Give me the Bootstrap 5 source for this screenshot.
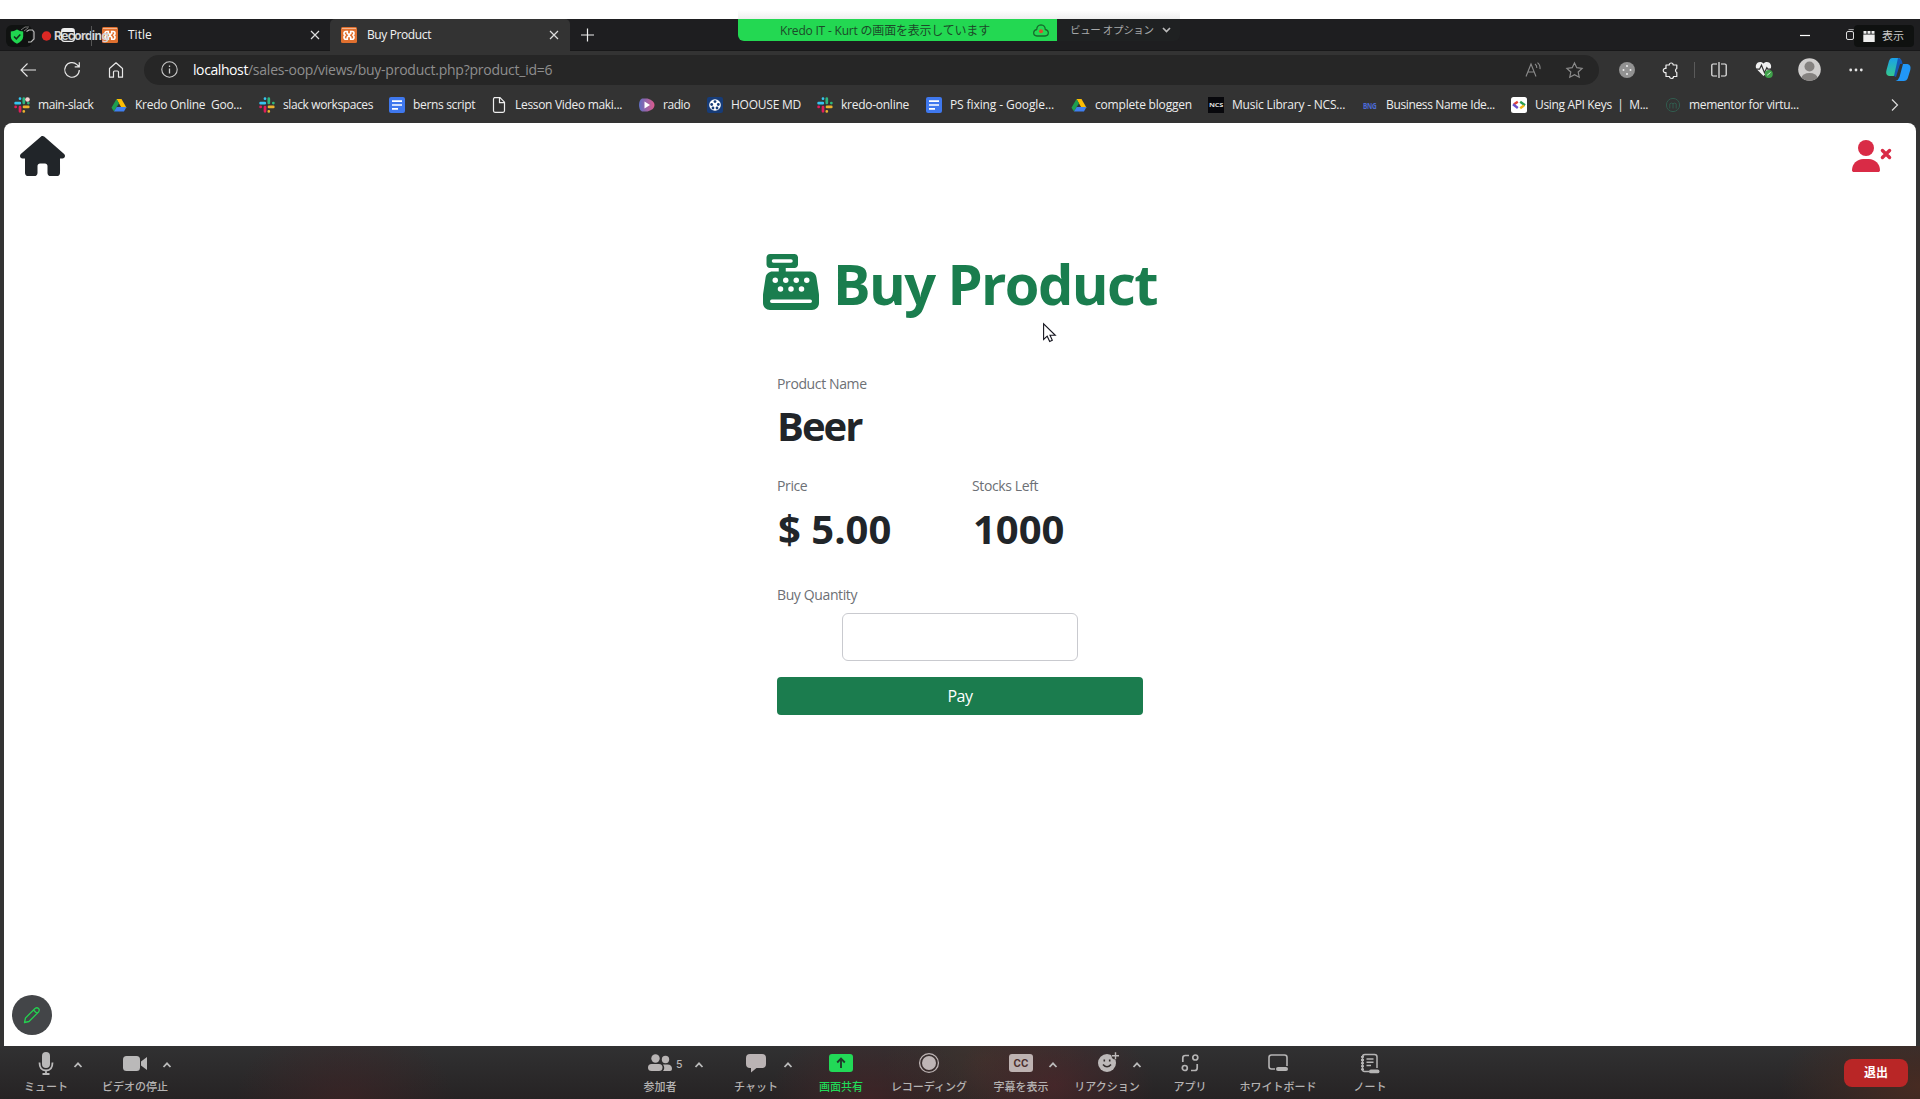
<!DOCTYPE html>
<html lang="ja">
<head>
<meta charset="utf-8">
<title>Buy Product</title>
<link rel="stylesheet" href="https://cdn.jsdelivr.net/npm/bootstrap@5.3.0/dist/css/bootstrap.min.css">
<style>
body{font-family:"Open Sans","Noto Sans CJK JP",sans-serif;background:#fff;height:1099px;overflow:hidden;position:relative}
svg{display:block;flex:none;overflow:visible}
.window{height:1080px;margin-top:19px;background:#333}
.tabstrip{height:32px;background:#1e1e20;font-size:12px;color:#f2f2f2;border-bottom:1px solid #181819;line-height:32px}
.tab-a{width:330px;padding-left:102px;padding-right:10px}
.tab-b{width:240px;height:32px;background:#333;padding:0 11px;border-radius:5px 5px 0 0;letter-spacing:-.39px}
.tab-a .cap,.tab-b .cap{margin-left:10px}
.winctl{padding-right:66px;gap:36px}
.toolbar{height:34px;padding:3px 9px 0 20px}
.address{width:1455px;height:30px;border-radius:15px;background:#262626;margin-left:20px;padding:0 16px 0 17px;font-size:14px;color:#8e8e8e;white-space:pre}
.host{color:#fff;letter-spacing:-.41px;margin-left:15px}
.path{letter-spacing:-.24px}
.ms-28{margin-left:28px}
.bookmarks{height:38px;padding-left:14px;padding-top:2px;color:#ededed;font-size:12px;margin-bottom:0}
.bookmarks>li{display:flex;align-items:center;gap:8px;white-space:pre;letter-spacing:-.34px;flex:none}
.bookmarks svg{width:16px;height:16px}
.bookmarks>li:nth-child(1){width:97px;letter-spacing:-.4px}
.bookmarks>li:nth-child(2){width:148px;letter-spacing:-.27px}
.bookmarks>li:nth-child(3){width:130px;letter-spacing:-.39px}
.bookmarks>li:nth-child(4){width:102px}
.bookmarks>li:nth-child(5){width:148px;letter-spacing:-.31px}
.bookmarks>li:nth-child(6){width:68px;letter-spacing:-.43px}
.bookmarks>li:nth-child(7){width:110px;letter-spacing:-.24px}
.bookmarks>li:nth-child(8){width:109px;letter-spacing:-.26px}
.bookmarks>li:nth-child(9){width:145px;letter-spacing:-.1px}
.bookmarks>li:nth-child(10){width:137px;letter-spacing:-.19px}
.bookmarks>li:nth-child(11){width:154px;letter-spacing:-.2px}
.bookmarks>li:nth-child(12){width:149px;letter-spacing:-.36px}
.bookmarks>li:nth-child(13){width:154px}
.bookmarks>li:nth-child(14){width:226px;letter-spacing:-.34px}
.viewport{height:923px;margin:0 4px;background:#fff;border-radius:8px 8px 0 0;color:#212529}
.topnav{padding:13px 24px 0 16px;height:127px}
.sheet{width:398px;margin:0 auto}
.heading{font-size:56px;font-weight:700;line-height:67px;color:#1a7d4e;letter-spacing:-1.6px;gap:14px;height:67px;white-space:nowrap;margin-left:2px}
.fields{padding:0 16px}
.caption{display:block;font-size:14px;line-height:21px;color:#6d7075;letter-spacing:-.38px}
.figure-big{font-size:40px;font-weight:700;line-height:48px;margin:9px 0 0;padding-left:1px;white-space:nowrap}
.item-name{letter-spacing:-2px;margin-top:8px;padding-left:0}
.pname{padding-top:56px;margin-bottom:25px}
.qty-label{margin-top:31px}
.qty{width:236px;height:48px;border:1px solid #c9cacf;border-radius:6px;margin:8px auto 0}
.pay{height:38px;line-height:36px;padding:0;border-radius:4px;background:#1b7c4e;border:0;color:#fff;font-size:16px;letter-spacing:-.5px;margin-top:16px}
.meeting{height:53px;color:#b5b3b3;font-size:11px;font-weight:500;padding:0 12px 0 6px;
background:radial-gradient(ellipse 110px 80px at 345px 55px,#45232588 0,transparent 100%),radial-gradient(ellipse 100px 80px at 868px 55px,#4d242799 0,transparent 100%),radial-gradient(ellipse 100px 70px at 1054px 40px,#50262aaa 0,transparent 100%),radial-gradient(ellipse 100px 80px at 985px 15px,#45332caa 0,transparent 100%),radial-gradient(ellipse 140px 80px at 1920px 40px,#472b22 0,transparent 100%),linear-gradient(#313132,#262324)}
.tool{width:80px;height:53px;position:relative;flex:none;padding-top:6px;text-align:center;white-space:nowrap}
.tool>svg:first-child{width:24px;height:24px;margin:0 auto 2px}
.tool div{line-height:18px}
.caret{position:absolute;top:15px;left:67px}
.far{left:74px}
.tool:nth-child(2){margin-left:9px}
.tool:nth-child(3){margin-left:445px}
.tool:nth-child(4){margin-left:16px}
.tool:nth-child(5){margin-left:5px;color:#22d957}
.tool:nth-child(6){margin-left:8px}
.tool:nth-child(7){margin-left:12px}
.tool:nth-child(8){margin-left:6px}
.tool:nth-child(8) .caret{left:65px}
.tool:nth-child(9){margin-left:3px}
.tool:nth-child(10){margin-left:8px}
.tool:nth-child(11){margin-left:12px}
.leave{width:64px;height:28px;border-radius:8px;background:#b92626;color:#fff;font-weight:700;font-size:12px;line-height:28px;text-align:center;margin-left:auto}
.banner{position:absolute;left:738px;top:19px;width:442px;height:22px;border-radius:0 0 6px 6px;overflow:hidden;font-size:12px;background:#1f2122;line-height:21px}
.shade{position:absolute;left:738px;top:10px;width:442px;height:9px;background:linear-gradient(#fff,#eee)}
.sharing{width:319px;background:#23d852;color:#1c4a29;padding:0 8px 0 42px;letter-spacing:-.2px}
.viewopt{color:#a7a9aa;padding-left:13px;font-size:10.5px;letter-spacing:-.35px;gap:8px}
.rec{position:absolute;left:6px;top:25px;height:22px;font-family:Inter,sans-serif;font-weight:700;font-size:12px;letter-spacing:-.6px;color:#d3d3d3}
.shield{width:26px;height:22px;border-radius:6px;background:#101211;padding-left:4px}
.rec-dot{margin:0 2px 0 8px}
.display-btn{position:absolute;left:1854px;top:25px;width:60px;height:22px;border-radius:4px;background:#0f1110;color:#c9c9c9;font-size:11px;gap:7px;padding-left:9px}
.wsicons{position:absolute;left:20px;top:26px}
.pen{position:absolute;left:12px;top:995px;width:40px;height:40px;border-radius:50%;background:#434548}
.pointer-arrow{position:absolute;left:1043px;top:323px}
</style>
</head>
<body>
<svg width="0" height="0" class="position-absolute">
<symbol id="xampp" viewBox="0 0 16 16"><rect width="16" height="16" rx="1.500" fill="#e0702f"/><path d="M1 1.500h14" stroke="#f5b58d"/><path d="M6.300 4.500H4.800Q3 4.500 3 6.300T4.800 8.200Q3 8.200 3 10.200T4.800 12.200H6.300V10.300L8 8.700l1.700 1.600v1.900h1.500q1.800 0 1.800-2t-1.800-2q1.800 0 1.800-1.900t-1.800-1.800H9.700v1.800L8 7.700 6.300 6.300z" fill="none" stroke="#fff" stroke-width="1.600"/></symbol>
<symbol id="slack" viewBox="0 0 16 16"><g stroke-width="2.700" stroke-linecap="round"><path d="M1.600 6.200h4.200M6 1.600v.1" stroke="#36c5f0"/><path d="M9.800 1.700v4.200M14.300 6.100h.1" stroke="#2eb67d"/><path d="M10 9.900h4.300M9.800 14.300v.1" stroke="#ecb22e"/><path d="M6 10v4.300M1.600 9.900h.1" stroke="#e01e5a"/></g></symbol>
<symbol id="drive" viewBox="0 0 16 16"><path d="M5.500 2h5l5 8.700h-5z" fill="#fbbc04"/><path d="M5.500 2 8 6.300 3 14.500.5 10.700z" fill="#1e9e50"/><path d="M3 14.500l2.700-4.500h9.800L13 14.500z" fill="#3f7ff0"/></symbol>
<symbol id="docs" viewBox="0 0 16 16"><rect width="16" height="16" rx="2" fill="#3f78ee"/><path d="M3 4.200h10M3 8h10M3 11.800h6" stroke="#fff" stroke-width="1.700"/></symbol>
<symbol id="x" viewBox="0 0 10 10"><path d="M1 1l8 8M9 1l-8 8" stroke="#ddd" stroke-width="1.200"/></symbol>
<symbol id="up" viewBox="0 0 10 8"><path d="M1.500 6 5 2.300 8.500 6" fill="none" stroke="#bbb" stroke-width="1.800"/></symbol>
</svg>

<div class="window">
 <header class="tabstrip d-flex">
  <div class="tab-a d-flex align-items-center"><svg width="16" height="16"><use href="#xampp"/></svg><span class="cap">Title</span><svg class="ms-auto" width="10" height="10"><use href="#x"/></svg></div>
  <div class="tab-b d-flex align-items-center"><svg width="16" height="16"><use href="#xampp"/></svg><span class="cap">Buy Product</span><svg class="ms-auto" width="10" height="10"><use href="#x"/></svg></div>
  <svg class="align-self-center ms-2" width="18" height="14" viewBox="0 0 18 14"><path d="M3 7h13M9.500.5v13" stroke="#eee" stroke-width="1.200"/></svg>
  <div class="winctl d-flex align-items-center ms-auto"><svg width="10" height="10"><path d="M0 5.500h10" stroke="#fff" stroke-width="1.200"/></svg><svg width="8" height="11" viewBox="0 0 8 11"><rect x=".5" y="2.500" width="7" height="8" rx="1.500" fill="none" stroke="#ddd"/><path d="M2.500.6h5q1.500 0 1.500 2" fill="none" stroke="#aaa"/></svg></div>
 </header>
 <nav class="toolbar d-flex align-items-center">
  <svg width="16" height="14" viewBox="0 0 16 14"><path d="M16 7H1M7.500.5 1 7l6.500 6.500" fill="none" stroke="#e8e8e8" stroke-width="1.100"/></svg>
  <svg class="ms-28" width="16" height="16" viewBox="0 0 16 16"><path d="M15.300 8A7.300 7.300 0 1 1 13 2.600l2 2M15.300.3v4.600h-4.600" fill="none" stroke="#e8e8e8" stroke-width="1.200"/></svg>
  <svg class="ms-28" width="16" height="16" viewBox="0 0 16 16"><path d="M1.500 6.500 8 .8l6.500 5.700v8.700h-4V10q0-1-1-1h-3q-1 0-1 1v5.200h-4z" fill="none" stroke="#e8e8e8" stroke-width="1.200" stroke-linejoin="round"/></svg>
  <div class="address d-flex align-items-center">
   <svg width="17" height="17" viewBox="0 0 17 17"><circle cx="8.500" cy="8.500" r="7.700" fill="none" stroke="#c9c9c9" stroke-width="1.100"/><path d="M8.500 7.500v5M8.500 4.500v1.500" stroke="#c9c9c9" stroke-width="1.300"/></svg>
   <span class="host">localhost</span><span class="path">/sales-oop/views/buy-product.php?product_id=6</span>
   <svg class="ms-auto" width="17" height="15" viewBox="0 0 17 15"><path d="M1 14.500 6 2l5 12.500M2.800 10h6.400M10 2q2 1.500 1.800 4M12.500.6q3 2.400 2.500 6.500" fill="none" stroke="#8b8b8b" stroke-width="1.100"/></svg>
   <svg class="ms-4" width="17" height="16" viewBox="0 0 17 16"><path d="M8.500.9l2.300 4.800 5.300.7-3.900 3.600 1 5.200-4.700-2.600-4.700 2.600 1-5.200L.9 6.400l5.300-.7z" fill="none" stroke="#8b8b8b" stroke-width="1.200"/></svg>
  </div>
  <svg width="16" height="16" viewBox="0 0 16 16" style="margin-left:20px"><circle cx="8" cy="8" r="8" fill="#929292"/><g fill="#eee"><circle cx="8" cy="4" r="1"/><circle cx="8" cy="12" r="1"/><circle cx="4.500" cy="8" r="1"/><circle cx="11.500" cy="8" r="1"/></g></svg>
  <svg class="ms-28" width="16" height="16" viewBox="0 0 16 16"><path d="M3 3h3.200a2 2 0 0 1 4 0h3.600v3.500a2.200 2.200 0 0 0 0 4V14.500h-3.300a2 2 0 0 1-4 0H3v-4a2.100 2.100 0 1 1 0-4z" fill="none" stroke="#eee" stroke-width="1.200" stroke-linejoin="round"/></svg>
  <svg width="1" height="16" style="margin-left:15px"><path d="M.5 0v16" stroke="#5a5a5a"/></svg>
  <svg class="ms-3" width="16" height="16" viewBox="0 0 16 16"><path d="M6 2H2Q.8 2 .8 3.200v9.600Q.8 14 2 14h4M10 2h4q1.200 0 1.200 1.200v9.600Q15.200 14 14 14h-4M8 0v16" fill="none" stroke="#eee" stroke-width="1.200"/></svg>
  <svg class="ms-28" width="18" height="17" viewBox="0 0 18 17"><path d="M8.500 15 1.500 8C-1 3.500 4-1.500 8.500 2.500 13-1.500 18 3.500 15.500 8z" fill="#f0f0f0"/><path d="M0 8.200h4.500l2-4 3 7.500 2.300-5 1 1.500H17" fill="none" stroke="#333" stroke-width="1.200"/><circle cx="13.800" cy="13" r="4" fill="#3fa04a"/><path d="M12.200 14.200 15.500 11.500" stroke="#d9f0da"/></svg>
  <svg width="23" height="23" viewBox="0 0 23 23" style="margin-left:25px"><clipPath id="av"><circle cx="11.500" cy="11.500" r="11.300"/></clipPath><g clip-path="url(#av)"><path d="M0 0h23v23H0z" fill="#d0cecd"/><circle cx="11.500" cy="8.500" r="5" fill="#858280"/><ellipse cx="11.500" cy="20" rx="8" ry="5" fill="#858280"/></g></svg>
  <svg class="ms-28" width="14" height="4" viewBox="0 0 14 4"><g fill="#e5e5e5"><circle cx="1.700" cy="2" r="1.400"/><circle cx="7" cy="2" r="1.400"/><circle cx="12.300" cy="2" r="1.400"/></g></svg>
  <svg width="25" height="23" viewBox="0 0 25 23" style="margin-left:23px"><defs><linearGradient id="c1" x2="0" y2="1"><stop stop-color="#1aa0ea"/><stop offset="1" stop-color="#35c98e"/></linearGradient></defs><path d="M6 0h6.500q2.500 0 2 3L10.500 15q-.8 3-3 3H3q-4-1-2.500-6L3 3Q4 0 6 0z" fill="url(#c1)"/><path d="M12 0q4 0 4.500 6H14l-4 13-2-1z" fill="#1557b5"/><path d="M17 6h4.500q4 1 2.800 6l-2.500 8q-1 3-4 3H9.500q3-1 4-4z" fill="#2197f8"/></svg>
 </nav>
 <ul class="bookmarks list-unstyled d-flex align-items-center">
  <li><svg viewBox="0 0 16 16"><use href="#slack"/><circle cx="13.500" cy="2.500" r="2.300" fill="#f6cfcf"/></svg>main-slack</li>
  <li><svg><use href="#drive"/></svg>Kredo Online&nbsp; Goo...</li>
  <li><svg><use href="#slack"/></svg>slack workspaces</li>
  <li><svg><use href="#docs"/></svg>berns script</li>
  <li><svg viewBox="0 0 16 16"><path d="M3 .7h6l4.500 4.500v8.600q0 1.500-1.500 1.500H4q-1.500 0-1.500-1.500V2Q2.500.7 4 .7M8.500.7v5h5" fill="none" stroke="#eee" stroke-width="1.200"/></svg>Lesson Video maki...</li>
  <li><svg viewBox="0 0 16 16"><defs><linearGradient id="rd"><stop stop-color="#5e6dc0"/><stop offset="1" stop-color="#db5b8d"/></linearGradient></defs><path d="M3 1.500h5.500q7 2 7 6.500t-7 6.500H3Q0 13 0 8t3-6.500z" fill="url(#rd)"/><path d="M5.500 4.500 11 8l-5.500 3.500z" fill="#fff"/></svg>radio</li>
  <li><svg viewBox="0 0 16 16"><rect width="16" height="16" rx="2" fill="#173c78"/><circle cx="8" cy="8" r="5.800" fill="#fff"/><g fill="#173c78"><circle cx="8" cy="4.600" r="1.400"/><circle cx="4.700" cy="7.500" r="1.400"/><circle cx="11.300" cy="7.500" r="1.400"/><circle cx="6" cy="11" r="1.400"/><circle cx="10" cy="11" r="1.400"/></g></svg>HOOUSE MD</li>
  <li><svg><use href="#slack"/></svg>kredo-online</li>
  <li><svg><use href="#docs"/></svg>PS fixing - Google...</li>
  <li><svg><use href="#drive"/></svg>complete bloggen</li>
  <li><svg viewBox="0 0 16 16"><path d="M0 0h16v16H0z" fill="#08080c"/><text x="1" y="10.200" font-size="6" font-weight="700" fill="#ddd" textLength="14" lengthAdjust="spacingAndGlyphs">NCS</text></svg>Music Library - NCS...</li>
  <li><svg viewBox="0 0 16 16"><text x="1" y="11.500" font-size="9.500" font-weight="700" fill="#4c6bd6" textLength="13.500" lengthAdjust="spacingAndGlyphs">BNG</text></svg>Business Name Ide...</li>
  <li><svg viewBox="0 0 16 16"><rect width="16" height="16" rx="2.500" fill="#fff"/><g fill="none" stroke-width="2.400"><path d="M6.800 4.800 3 7.300" stroke="#e34335"/><path d="M2 7.300 6.800 11" stroke="#6a50c8"/><path d="M9.200 4.800 14 8.300" stroke="#2a9e52"/><path d="M13 8.500 9.200 11.200" stroke="#f2b517"/></g></svg>Using API Keys&nbsp; |&nbsp; M...</li>
  <li><svg viewBox="0 0 16 16"><circle cx="8" cy="8" r="6.600" fill="none" stroke="#315b4e"/><path d="M4.800 11.500V6.800q1.600-1.500 3.200 0v4.700M8 6.800q1.600-1.500 3.200 0v4.700" fill="none" stroke="#315b4e"/></svg>mementor for virtu...</li>
  <li><svg viewBox="0 0 16 16"><path d="M1 2.500 6.500 8 1 13.500" fill="none" stroke="#ddd" stroke-width="1.200"/></svg></li>
 </ul>

 <main class="viewport">
  <nav class="topnav d-flex justify-content-between">
   <svg width="45" height="40" viewBox="0 0 576 512"><path fill="#212529" d="M575.800 255.500c0 18-15 32.100-32 32.100h-32l.7 160.200c0 2.700-.2 5.400-.5 8.100V472c0 22.100-17.900 40-40 40H392c-22.100 0-40-17.900-40-40v-88c0-17.700-14.300-32-32-32h-64c-17.700 0-32 14.300-32 32v88c0 22.100-17.900 40-40 40h-80c-22.100 0-40-17.900-40-40V287.600H32c-18 0-32-14-32-32.100 0-9 3-17 10-24L266.400 8c7-7 15-8 22-8s15 2 21 7l255.400 224.500c8 7 12 15 11 24z"/></svg>
   <svg class="mt-1" width="40" height="32" viewBox="0 0 640 512"><g fill="#d92b46"><circle cx="224" cy="128" r="128"/><path d="M178.300 304C79.800 304 0 383.800 0 482.300 0 498.700 13.300 512 29.700 512h388.600c16.400 0 29.700-13.300 29.700-29.700C448 383.800 368.200 304 269.700 304z"/></g><path d="m487 167 114 114m0-114L487 281" stroke="#d92b46" stroke-width="54" stroke-linecap="round"/></svg>
  </nav>
  <section class="sheet">
   <h1 class="heading d-flex mb-0"><svg class="mt-1" width="56" height="56" viewBox="0 0 512 512"><path fill="#1a7d4e" d="M64 0C46.300 0 32 14.300 32 32v64c0 17.700 14.300 32 32 32h80v32H87c-31.600 0-58.500 23.100-63.300 54.400L1.100 364.100C.4 368.800 0 373.600 0 378.400V448c0 35.300 28.700 64 64 64h384c35.300 0 64-28.700 64-64v-69.600c0-4.800-.4-9.600-1.100-14.400l-22.700-149.600C483.500 183.100 456.600 160 425 160H208v-32h80c17.700 0 32-14.300 32-32V32c0-17.700-14.300-32-32-32z"/><path d="M96 64h160M80 432h352" stroke="#fff" stroke-width="32" stroke-linecap="round"/><g fill="#fff"><circle cx="112" cy="240" r="25"/><circle cx="208" cy="240" r="25"/><circle cx="304" cy="240" r="25"/><circle cx="400" cy="240" r="25"/><circle cx="160" cy="320" r="25"/><circle cx="256" cy="320" r="25"/><circle cx="352" cy="320" r="25"/></g></svg><span>Buy Product</span></h1>
   <form class="fields">
    <div class="pname"><span class="caption">Product Name</span><p class="figure-big item-name">Beer</p></div>
    <div class="row">
     <div class="col-6"><span class="caption">Price</span><p class="figure-big">$ 5.00</p></div>
     <div class="col-6"><span class="caption">Stocks Left</span><p class="figure-big">1000</p></div>
    </div>
    <label class="caption qty-label" for="qty">Buy Quantity</label>
    <input id="qty" class="form-control qty" type="text">
    <button type="button" class="btn btn-success w-100 pay">Pay</button>
   </form>
  </section>
 </main>

 <footer class="meeting d-flex">
  <div class="tool"><svg viewBox="0 0 24 24"><rect x="8" y="0" width="8" height="16" rx="4" fill="#bab9b9"/><path d="M5.500 10.500q0 8 6.500 8t6.500-8M12 18v4M8.500 22h7" fill="none" stroke="#bab9b9" stroke-width="1.800"/></svg><div>ミュート</div><svg class="caret" width="10" height="8"><use href="#up"/></svg></div>
  <div class="tool"><svg viewBox="0 0 24 24"><rect y="4" width="17" height="15" rx="3.500" fill="#bab9b9"/><path d="M18 9.500 24 5v13l-6-4.500z" fill="#bab9b9"/></svg><div>ビデオの停止</div><svg class="caret" width="10" height="8"><use href="#up"/></svg></div>
  <div class="tool"><svg viewBox="0 0 24 24"><g fill="#b8b4b4"><circle cx="7.500" cy="6.500" r="4.200"/><circle cx="17.500" cy="7.500" r="3.700"/><rect y="12" width="14.500" height="7" rx="3.500"/><path d="M15 12.500h4.500Q24 12.500 24 17q0 2-2 2h-7q2.500-3 0-6.500z"/></g><text x="28" y="15.500" font-family="Inter,sans-serif" font-size="10.500" fill="#b8b4b4">5</text></svg><div>参加者</div><svg class="caret far" width="10" height="8"><use href="#up"/></svg></div>
  <div class="tool"><svg viewBox="0 0 24 24"><path d="M6 2h12q4 0 4 4v6q0 4-4 4h-5.500L7 20.500V16H6q-4 0-4-4V6q0-4 4-4z" fill="#bab3b4"/></svg><div>チャット</div><svg class="caret" width="10" height="8"><use href="#up"/></svg></div>
  <div class="tool"><svg viewBox="0 0 24 24"><rect y="2" width="24" height="18" rx="3" fill="#22d957"/><path d="M12 16V7M8.200 10.500 12 6.700l3.800 3.800" fill="none" stroke="#20392a" stroke-width="1.900"/></svg><div>画面共有</div></div>
  <div class="tool"><svg viewBox="0 0 24 24"><circle cx="12" cy="11" r="9.400" fill="none" stroke="#beb5b5" stroke-width="1.300"/><circle cx="12" cy="11" r="7" fill="#beb5b5"/></svg><div>レコーディング</div></div>
  <div class="tool"><svg viewBox="0 0 24 24"><rect y="2" width="24" height="18" rx="3" fill="#beb3b2"/><text x="12" y="14.800" text-anchor="middle" font-family="Inter,sans-serif" font-size="10" font-weight="700" fill="#4b302f">CC</text></svg><div>字幕を表示</div><svg class="caret" width="10" height="8"><use href="#up"/></svg></div>
  <div class="tool"><svg viewBox="0 0 24 24"><circle cx="12" cy="11" r="9" fill="#bdb9b9"/><circle cx="20.500" cy="3.500" r="4" fill="#37302f"/><path d="M20.500.2v7M17 3.700h7" stroke="#bdb9b9" stroke-width="1.400"/><path d="M9.300 7.500v2M14.700 7.500v2M8 12.500q4 4.500 8 0" fill="none" stroke="#332d2d" stroke-width="1.600"/></svg><div>リアクション</div><svg class="caret" width="10" height="8"><use href="#up"/></svg></div>
  <div class="tool"><svg viewBox="0 0 24 24"><g fill="none" stroke="#b5b4b4" stroke-width="1.700"><path d="M4.800 10V6q0-2.500 2.500-2.500H11M13 18.500h3.700q2.500 0 2.500-2.500v-4"/><circle cx="17.300" cy="5.500" r="2.500"/><circle cx="6.800" cy="16" r="2.500"/></g></svg><div>アプリ</div></div>
  <div class="tool"><svg viewBox="0 0 24 24"><path d="M9 17H5.500Q3 17 3 14.500v-9Q3 3 5.500 3h13Q21 3 21 5.500V14" fill="none" stroke="#b5b4b4" stroke-width="1.600"/><rect x="10" y="15" width="12" height="4" rx="2" fill="#b5b4b4"/></svg><div>ホワイトボード</div></div>
  <div class="tool"><svg viewBox="0 0 24 24"><path d="M11 19.500H6.500q-2 0-2-2V5q0-2.500 2.500-2.500h9.500Q19 2.500 19 5v11M8.500 7h7M8.500 10.200h7M8.500 13.400h4.500" fill="none" stroke="#b5b4b4" stroke-width="1.500"/><path d="M4.500 4v15" stroke="#b5b4b4" stroke-width="3" stroke-dasharray="1.800 1.300"/><rect x="11" y="17.500" width="10.500" height="3.800" rx="1.900" fill="#b5b4b4"/></svg><div>ノート</div></div>
  <div class="leave align-self-center">退出</div>
 </footer>
</div>

<div class="rec d-flex align-items-center"><div class="shield h-100 d-flex align-items-center"><svg width="14" height="15" viewBox="0 0 14 15"><path d="M7 .5q3 2 6.200 2v5Q13 12 7 14.700 1 12 .8 7.500v-5Q4 2.500 7 .5z" fill="#20d650"/><path d="m4 7.500 2.300 2.300L10.300 5.500" fill="none" stroke="#14301d" stroke-width="1.500"/></svg></div><svg class="rec-dot" width="12" height="10"><circle cx="6.500" cy="5" r="4.700" fill="#dc2824"/></svg><span>Recording</span></div>
<div class="wsicons"><svg width="72" height="20" viewBox="0 0 72 20"><g fill="none" stroke="#777"><path d="M1 4 5 1h4M4 5l4-3"/><path d="M6.500 5.500 9 4h3.500l1.500 2v7l-3 3H8" stroke="#bbb" stroke-width="1.200"/><rect x="41.700" y="2.700" width="12.600" height="12.600" rx="2.500" stroke="#eee" stroke-width="1.300"/><path d="M42 4.500h12" stroke="#eee" stroke-width="3"/><path d="M71.500 0v20" stroke="#555"/></g></svg></div>
<div class="shade"></div>
<div class="banner d-flex"><div class="sharing d-flex justify-content-between align-items-center"><span>Kredo IT - Kurt の画面を表示しています</span><svg width="16" height="13" viewBox="0 0 16 13"><path d="M4 12q-3.500-.3-3.300-3.500Q1 6 3.700 5.500 4 1 8 .8q4 .2 4.300 4.700Q15 6 15.300 8.500 15.500 11.700 12 12z" fill="none" stroke="#176b2d" stroke-width="1.300"/><circle cx="8" cy="7.300" r="2" fill="#d94c32"/></svg></div><div class="viewopt d-flex align-items-center"><span>ビュー オプション</span><svg width="9" height="6" viewBox="0 0 9 6"><path d="m1 1 3.500 3.500L8 1" fill="none" stroke="#bbb" stroke-width="1.700"/></svg></div></div>
<div class="display-btn d-flex align-items-center"><svg width="12" height="11" viewBox="0 0 12 11"><path d="M.3 3.500h11.400V11H.3zM.5 0h3v2.700h-3zM4.500 0h3v2.700h-3zM8.500 0h3v2.700h-3z" fill="#eee"/></svg><span>表示</span></div>
<svg class="pointer-arrow" width="13" height="20" viewBox="0 0 13 20"><path d="M.6.8v15.700l3.600-3.300 2.500 5.300 2.600-1.200L7 12.300h5.300z" fill="#fff" stroke="#15151f" stroke-width="1.100"/></svg>
<div class="pen d-flex align-items-center justify-content-center"><svg width="18" height="18" viewBox="0 0 18 18"><path d="M1.500 16.500 2.500 12 12 2.500q2-1.500 3.500 0t0 3.500L6 15.500zM10.500 4l3.500 3.500" fill="none" stroke="#25cf50" stroke-width="1.300" stroke-linejoin="round"/></svg></div>
<script src="https://cdn.jsdelivr.net/npm/bootstrap@5.3.0/dist/js/bootstrap.bundle.min.js"></script>
</body>
</html>
